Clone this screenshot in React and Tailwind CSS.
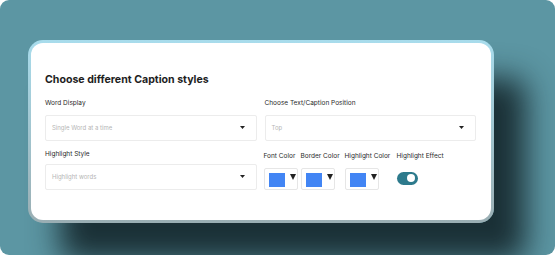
import React from 'react';

const Caret = ({ className = '' }) => (
  <svg className={className} width="5" height="3" viewBox="0 0 5 3">
    <path d="M0 0h5L2.5 3z" fill="#222" />
  </svg>
);

const Select = ({ value }) => (
  <div className="flex h-[26px] items-center justify-between rounded-[2px] border border-[#ececec] bg-white pl-[6px] pr-[11px]">
    <span className="text-[6px] text-[#b5b5b5]">{value}</span>
    <Caret />
  </div>
);

const Swatch = () => (
  <div className="flex h-[22px] w-[34px] items-start gap-[5px] rounded-[2px] border border-[#e6e6e6] bg-white pl-[4px] pt-[4px]">
    <div className="h-[14px] w-[16px] bg-[#4285f4]" />
    <svg width="6" height="6" viewBox="0 0 6 6" className="mt-[1px]">
      <path d="M0 0h6L3 6z" fill="#222" />
    </svg>
  </div>
);

const Label = ({ children }) => (
  <span className="whitespace-nowrap text-[6.5px] leading-[11px] text-[#2a2a2a]">{children}</span>
);

const App = () => {
  return (
    <div className="h-[255px] w-[555px] bg-white" style={{ fontFamily: 'Inter, "Noto Sans", sans-serif' }}>
      <div className="h-full w-full overflow-hidden rounded-[9px] bg-[#5c96a3] pl-[28px] pt-[40px]">
        <div className="h-[183px] w-[466px] rounded-[15px] bg-gradient-to-b from-[#a8dcec] to-[#9aaeb3] p-[3px] shadow-[32px_38px_30px_rgba(15,30,35,0.85)]">
          <div className="h-full w-full rounded-[12px] bg-white pl-[14px] pr-[15px] pt-[32px]">
            <h1 className="text-[10.6px] font-bold leading-none text-[#1e1e1e]">Choose different Caption styles</h1>
            <div className="mt-[12px] grid grid-cols-2 gap-x-[8px]">
              <div className="flex flex-col">
                <Label>Word Display</Label>
                <div className="mt-[6px]">
                  <Select value="Single Word at a time" />
                </div>
              </div>
              <div className="flex flex-col">
                <Label>Choose Text/Caption Position</Label>
                <div className="mt-[6px]">
                  <Select value="Top" />
                </div>
              </div>
              <div className="mt-[8px] flex flex-col">
                <Label>Highlight Style</Label>
                <div className="mt-[4px]">
                  <Select value="Highlight words" />
                </div>
              </div>
              <div className="-ml-[1px] mt-[10px] flex">
                <div className="flex w-[37px] flex-col gap-[6px]">
                  <Label>Font Color</Label>
                  <Swatch />
                </div>
                <div className="flex w-[44px] flex-col gap-[6px]">
                  <Label>Border Color</Label>
                  <Swatch />
                </div>
                <div className="flex w-[52px] flex-col gap-[6px]">
                  <Label>Highlight Color</Label>
                  <Swatch />
                </div>
                <div className="flex flex-col gap-[6px]">
                  <Label>Highlight Effect</Label>
                  <div className="mt-[4px] flex h-[13px] w-[21px] items-center justify-end rounded-full bg-[#2d7a8c] pr-[3px]">
                    <div className="h-[8px] w-[8px] rounded-full bg-white" />
                  </div>
                </div>
              </div>
            </div>
          </div>
        </div>
      </div>
    </div>
  );
};

export default App;
